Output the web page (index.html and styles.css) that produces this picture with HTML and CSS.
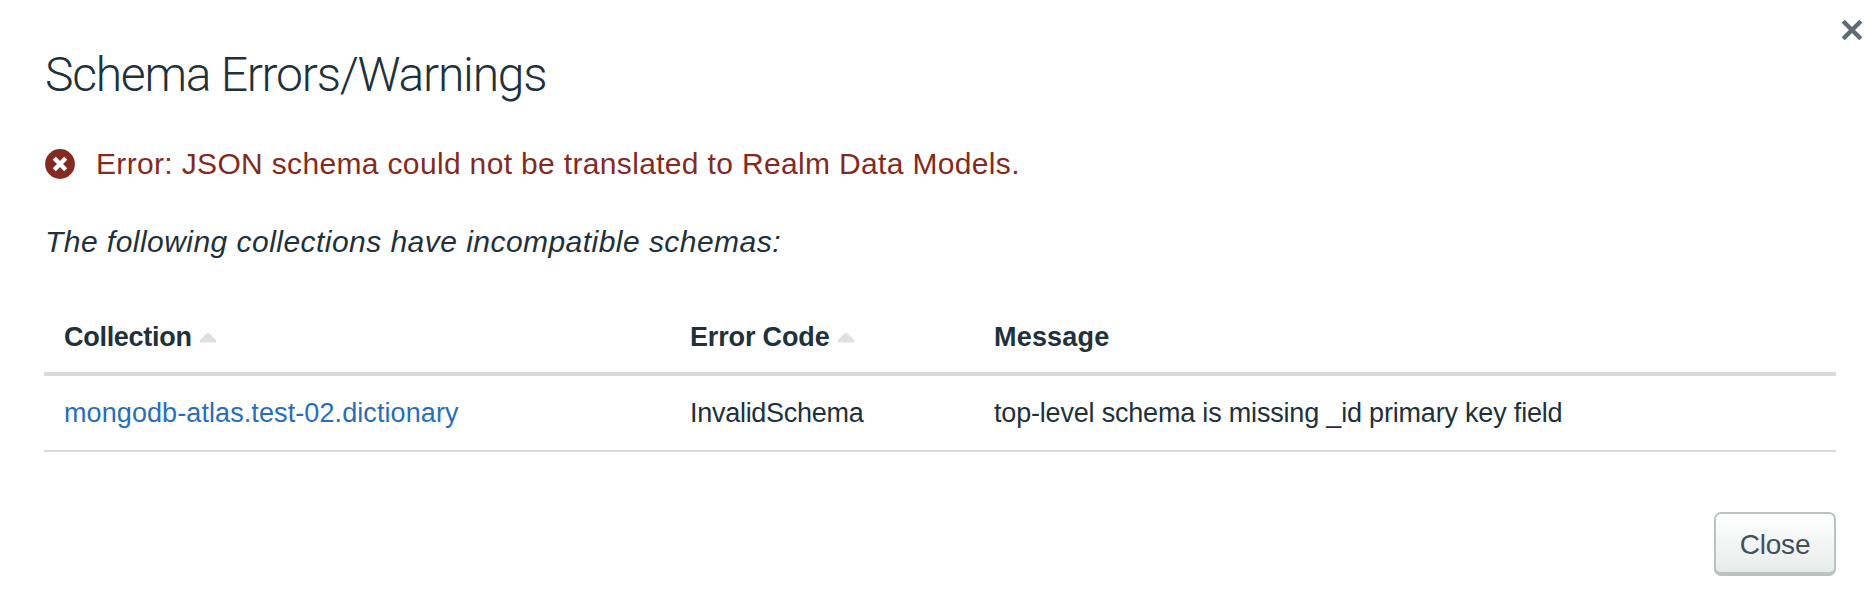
FILE: index.html
```html
<!DOCTYPE html>
<html lang="en">
<head>
<meta charset="utf-8">
<title>Schema Errors/Warnings</title>
<link rel="stylesheet" href="styles.css">
</head>
<body>
<main class="modal">
  <button class="dismiss" aria-label="Dismiss">
    <svg width="22" height="22" viewBox="0 0 22 22"><path d="M2.2 2.2 19.8 19.8M19.8 2.2 2.2 19.8" stroke="#5d6c74" stroke-width="4.4"/></svg>
  </button>
  <h1 class="title">Schema Errors/Warnings</h1>
  <div class="error">
    <svg class="error-icon" width="30" height="30" viewBox="0 0 30 30"><circle cx="15" cy="15" r="14.9" fill="#832b22"/><path d="M9.3 9.3 20.7 20.7M20.7 9.3 9.3 20.7" stroke="#fff" stroke-width="4.4"/></svg>
    <span>Error: JSON schema could not be translated to Realm Data Models.</span>
  </div>
  <p class="note">The following collections have incompatible schemas:</p>
  <div class="table">
    <div class="row head">
      <div class="cell"><span class="h-collection">Collection</span><svg class="sort" width="18" height="12" viewBox="0 0 18 12"><path d="M8.2.9Q9 .2 9.8.9L17 7.8Q18 10.5 16 10.5H2Q0 10.5 1 7.8Z" fill="#dee0e3"/></svg></div>
      <div class="cell"><span class="h-code">Error Code</span><svg class="sort" width="18" height="12" viewBox="0 0 18 12"><path d="M8.2.9Q9 .2 9.8.9L17 7.8Q18 10.5 16 10.5H2Q0 10.5 1 7.8Z" fill="#dee0e3"/></svg></div>
      <div class="cell"><span class="h-message">Message</span></div>
    </div>
    <div class="row item">
      <div class="cell"><a class="link">mongodb-atlas.test-02.dictionary</a></div>
      <div class="cell"><span class="code">InvalidSchema</span></div>
      <div class="cell"><span class="message">top-level schema is missing _id primary key field</span></div>
    </div>
  </div>
  <div class="footer"><button class="close">Close</button></div>
</main>
</body>
</html>
```

FILE: styles.css
```css
* { box-sizing: border-box; }
body {
  margin: 0;
  background: #fff;
  color: #21313c;
  font-family: "Liberation Sans", Arial, sans-serif;
}
.modal {
  position: relative;
  width: 1874px;
  height: 598px;
  padding: 42px 38px 0 44px;
}
.dismiss {
  position: absolute;
  top: 19px;
  right: 11px;
  display: flex;
  padding: 0;
  border: 0;
  background: none;
}
.title {
  margin: 0;
  height: 64px;
  padding-left: 1px;
  font: 300 48px/65px Roboto, sans-serif;
  letter-spacing: -1.25px;
}
.error {
  display: flex;
  align-items: center;
  height: 40px;
  margin-top: 38px;
  color: #832b22;
  font-size: 30px;
  letter-spacing: 0.34px;
}
.error-icon { margin: 0 21px 0 1px; }
.note {
  margin: 38px 0 0;
  padding-left: 1px;
  font-size: 30px;
  line-height: 40px;
  font-style: italic;
  letter-spacing: 0.46px;
}
.table { margin-top: 40px; }
.row {
  display: grid;
  grid-template-columns: 626px 304px 1fr;
  padding-left: 20px;
  font-size: 27px;
}
.cell { display: flex; align-items: center; white-space: nowrap; }
.head { height: 74px; border-bottom: 4px solid #d6dbda; font-weight: 700; }
.item { height: 76px; border-bottom: 2px solid #d6dbda; }
.sort { margin: 2px 0 0 7px; }
.h-collection { letter-spacing: -0.28px; }
.h-code { letter-spacing: -0.15px; }
.h-message { letter-spacing: 0.2px; }
.link { color: #2a6ebb; letter-spacing: 0.09px; }
.code { letter-spacing: -0.28px; }
.message { letter-spacing: -0.19px; }
.footer { display: flex; justify-content: flex-end; margin-top: 60px; }
.close {
  width: 122px;
  height: 64px;
  padding: 3px 0 0;
  border: 2px solid #b9c4c1;
  border-bottom-width: 4px;
  border-radius: 7px;
  background: linear-gradient(#fff, #e7ecea);
  color: #424f5d;
  font: 28px "Liberation Sans", Arial, sans-serif;
  letter-spacing: -0.2px;
}
```
